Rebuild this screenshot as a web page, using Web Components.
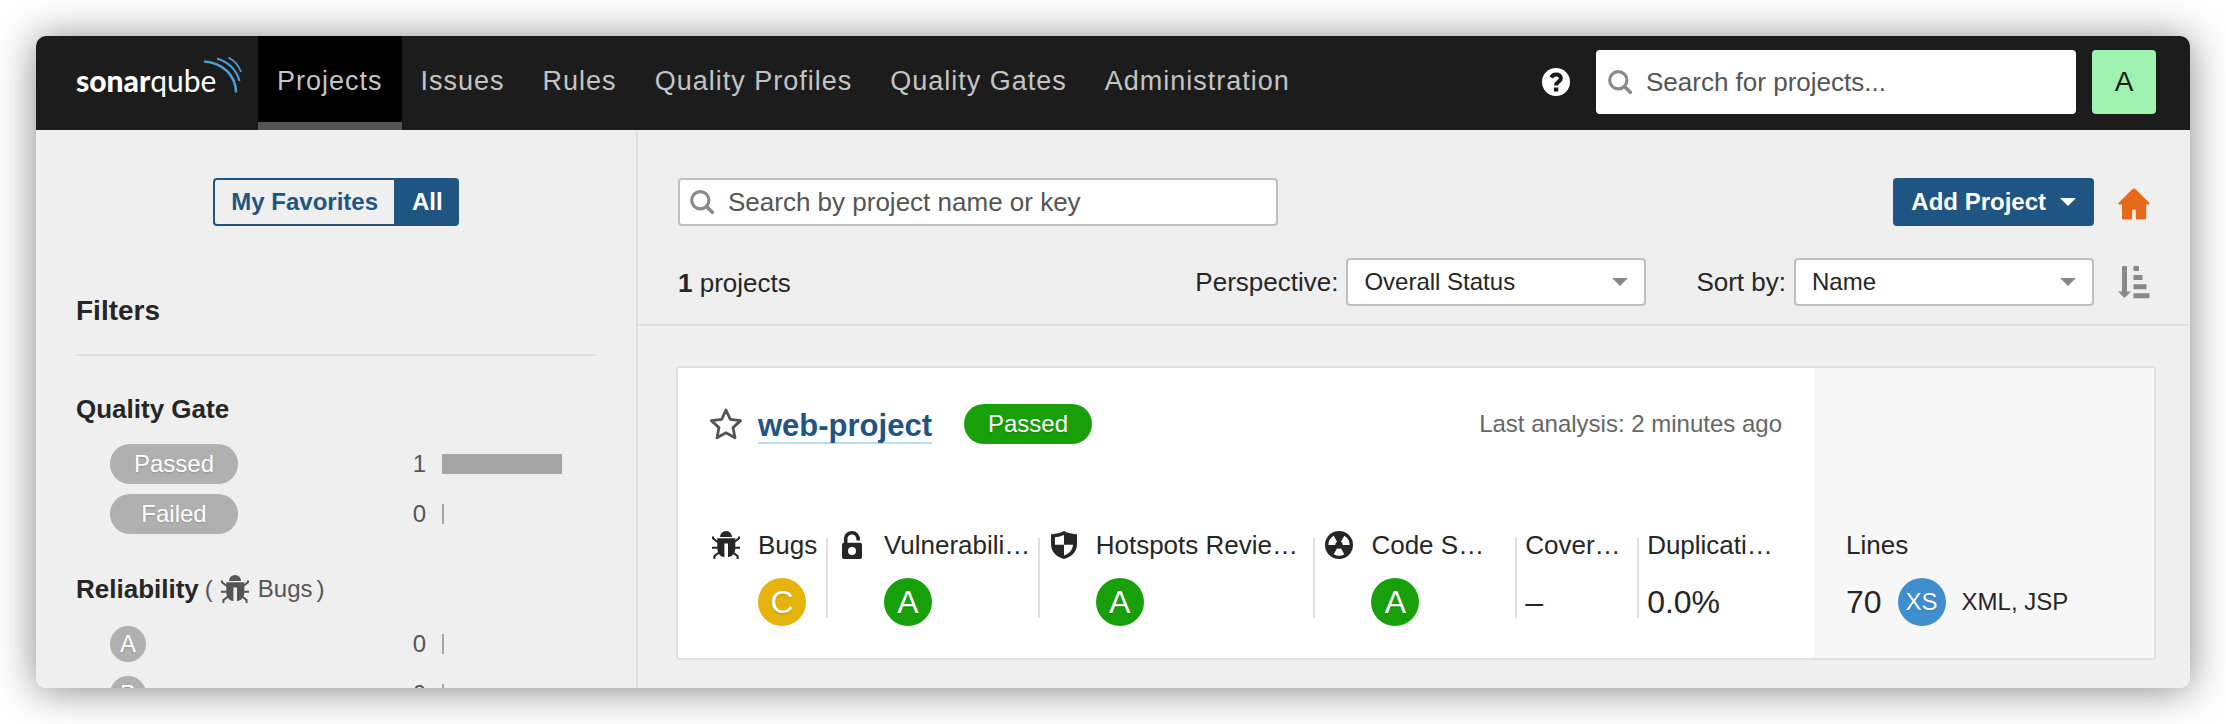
<!DOCTYPE html>
<html lang="en">
<head>
<meta charset="utf-8">
<meta name="viewport" content="width=device-width, initial-scale=1">
<title>Projects</title>
<style>
  html, body { margin: 0; height: 100%; background: #fff; }
  body {
    --blue: #1f5582; --line: #e0e0e0; --field: #bfbfbf; --ink: #262626; --muted: #555;
    font-family: "Liberation Sans", Arial, sans-serif; font-size: 26px; line-height: 32px; color: var(--ink);
  }
</style>
</head>
<body>
<sq-window>
  <sq-navbar slot="top"></sq-navbar>
  <sq-sidebar slot="side"></sq-sidebar>
  <sq-toolbar></sq-toolbar>
  <sq-project-card name="web-project" status="Passed" analysed="Last analysis: 2 minutes ago">
    <sq-metric icon="bug" label="Bugs" first><sq-rating value="C"></sq-rating></sq-metric>
    <sq-metric icon="lock" label="Vulnerabili…"><sq-rating value="A"></sq-rating></sq-metric>
    <sq-metric icon="shield" label="Hotspots Revie…"><sq-rating value="A"></sq-rating></sq-metric>
    <sq-metric icon="smell" label="Code S…"><sq-rating value="A"></sq-rating></sq-metric>
    <sq-metric label="Cover…">–</sq-metric>
    <sq-metric label="Duplicati…" last>0.0%</sq-metric>
    <sq-metric slot="size" label="Lines" first last>70<sq-rating value="XS"></sq-rating><small>XML, JSP</small></sq-metric>
  </sq-project-card>
</sq-window>

<script>
const define = (name, render) => customElements.define(name, class extends HTMLElement {
  connectedCallback() {
    if (!this.shadowRoot) this.attachShadow({ mode: 'open' }).innerHTML = render(this);
  }
});
const attr = (el, name) => el.getAttribute(name) || '';

const icons = {
  bug: [28, 28, '<path d="M8 6a6 6 0 0 1 12 0z"/><path d="M5.3 7.2h18V17c0 5-2.6 8.6-7.3 9.2V12.4h-3.6v13.8C7.8 25.6 5.3 22 5.3 17z"/><path d="M1 5.5v1.8l5 4M27 5.5v1.8l-5 4M0 16.8h7M28 16.8h-7M7 21.5l-4.6 3.6V28M21 21.5l4.6 3.6V28" fill="none" stroke="currentColor" stroke-width="2"/>'],
  lock: [20, 28, '<path fill-rule="evenodd" d="M2 11.7h16a2 2 0 0 1 2 2V26a2 2 0 0 1-2 2H2a2 2 0 0 1-2-2V13.7a2 2 0 0 1 2-2zM10 16a4 4 0 1 0 0 8a4 4 0 0 0 0-8z"/><path d="M3.7 13V7.5C3.7 4 6.5 1.8 10 1.8s6.3 2.4 6.3 7.7" fill="none" stroke="currentColor" stroke-width="3.6"/>'],
  shield: [26, 28, '<path fill-rule="evenodd" d="M13 0C9 2.2 4.5 3 0 3.2V13c0 7.5 5 12.6 13 15 8-2.4 13-7.5 13-15V3.2C21.5 3 17 2.2 13 0zM13 4v9.8H4V6.3C7 6 10.3 5.2 13 4zM13 13.8h9c-.5 5.2-3.7 9-9 10.8z"/>'],
  smell: [28, 28, '<circle cx="14" cy="14" r="14"/><g fill="#fff">' + [0, 120, 240].map(a => `<path transform="rotate(${a} 14 14)" d="M15.9 17.3L19.3 23.2A10.6 10.6 0 0 1 8.7 23.2L12.1 17.3A3.8 3.8 0 0 0 15.9 17.3z"/>`).join('') + '</g>'],
  star: [32, 32, '<path d="M16 2l4.3 9.3 10.3 1.3-7.6 7 2 10.2-9-5-9 5 2-10.2-7.6-7 10.3-1.3z" fill="none" stroke="currentColor" stroke-width="2.8" stroke-linejoin="round"/>'],
  search: [24, 24, '<circle cx="10.3" cy="10.3" r="8.6" fill="none" stroke="currentColor" stroke-width="3.2"/><path d="M16.5 16.5l5.8 5.8" fill="none" stroke="currentColor" stroke-width="3.6" stroke-linecap="round"/>'],
  help: [28, 28, '<circle cx="14" cy="14" r="14"/><path d="M9.3 9.6C10.3 7.5 12 6.6 14.3 6.6c2.7 0 4.6 1.4 4.6 3.7 0 3.4-4.8 3.3-4.8 7.2" fill="none" stroke="#1c1c1c" stroke-width="4"/><path d="M11.9 19.4h4.4v4.2h-4.4z" fill="#1c1c1c"/>'],
  home: [32, 32, '<path d="M16 .5c.6 0 1.2.3 1.7.8L31 14.4c.9 1 .5 2.2-.9 2.2h-1.9V30a1.6 1.6 0 0 1-1.6 1.6h-7.2A1.6 1.6 0 0 1 17.8 30v-7c0-.8-.6-1.4-1.4-1.4h-.8c-.8 0-1.4.6-1.4 1.4v7a1.6 1.6 0 0 1-1.6 1.6H5.6A1.6 1.6 0 0 1 4 30V16.6H1.9c-1.4 0-1.8-1.2-.9-2.2L14.3 1.3c.5-.5 1.1-.8 1.7-.8z"/>'],
  sort: [32, 32, '<path d="M4 1a1 1 0 0 1 1-1h3a1 1 0 0 1 1 1v24.5h4L6.5 32 0 25.5h4zM15.5 0H21v5h-5.5zM15.5 9h9v5h-9zM15.5 18.2h13v5h-13zM15.5 27.3H31.5v5h-16z"/>'],
  caret: [16, 8, '<path d="M0 0h16L8 8z"/>']
};

define('sq-icon', el => {
  const [w, h, body] = icons[attr(el, 'name')];
  return `<style>:host{display:inline-flex;flex:none}svg{display:block;overflow:visible}</style>
  <svg width="${w}" height="${h}" viewBox="0 0 ${w} ${h}" fill="currentColor" aria-hidden="true">${body}</svg>`;
});

define('sq-window', () => `<style>
  :host{display:block;box-sizing:border-box;height:100vh;padding:36px;overflow:hidden}
  .frame{display:flex;flex-direction:column;height:100%;border-radius:10px;overflow:hidden;background:#efefef}
  .shade{height:100%;border-radius:10px;box-shadow:0 2px 40px rgba(0,0,0,.48)}
  .body{display:flex;flex:1;min-height:0}
  main{flex:1;min-width:0}
</style>
<div class="shade"><div class="frame"><slot name="top"></slot>
<div class="body"><slot name="side"></slot><main><slot></slot></main></div></div></div>`);

define('sq-navbar', () => `<style>
  :host{display:flex;align-items:center;flex:none;height:94px;padding:0 34px 0 40px;background:#1c1c1c;box-sizing:border-box}
  .logo{display:block;width:166px;margin-right:16px}
  svg{display:block}
  nav{display:flex;flex:1;align-self:stretch}
  nav a{display:flex;align-items:center;padding:0 19px;border-bottom:8px solid transparent;border-top:4px solid transparent;color:#c4c4c4;font-size:27px;letter-spacing:1px;text-decoration:none;white-space:nowrap}
  nav a.on{background:#000;border-top-color:#000;border-bottom-color:#555}
  button{border:0;padding:0;font:inherit;cursor:pointer}
  .help{display:flex;background:none;color:#fff;margin-right:26px}
  .me{width:64px;height:64px;margin-left:16px;border-radius:4px;background:#9ff2b0;color:#1c1c1c;font-size:28px}
  sq-search{width:480px}
  .tail{display:flex;align-items:center;padding-bottom:2px}
</style>
<a class="logo" href="#" aria-label="sonarqube"><svg width="166" height="54" viewBox="0 5 166 54">
  <text y="41" font-family="Lato, sans-serif" font-size="30" fill="#fff"><tspan font-weight="900">sonar</tspan><tspan font-weight="400">qube</tspan></text>
  <g fill="none" stroke="#4b9fd5"><path d="M128 10.5C147 11.5 160 25 160 41.5" stroke-width="2.6"/><path d="M141 7.5C152 11 160.5 19 163.5 30" stroke-width="2"/><path d="M152.5 6.5C158 9.5 163 15 165 21" stroke-width="1.7"/></g>
</svg></a>
<nav><a class="on" href="#">Projects</a><a href="#">Issues</a><a href="#">Rules</a><a href="#">Quality Profiles</a><a href="#">Quality Gates</a><a href="#">Administration</a></nav>
<div class="tail"><button class="help" aria-label="Help"><sq-icon name="help"></sq-icon></button>
<sq-search hint="Search for projects..." tall></sq-search>
<button class="me">A</button></div>`);

define('sq-search', el => `<style>
  :host{display:block}
  label{display:flex;align-items:center;box-sizing:border-box;height:48px;padding:0 10px;gap:14px;background:#fff;border:2px solid var(--field);border-radius:4px;color:#8a8a8a}
  :host([tall]) label{height:64px;border-color:#fff}
  input{flex:1;min-width:0;border:0;outline:0;padding:0;background:none;font:inherit;color:var(--ink)}
  input::placeholder{color:#555;opacity:1}
</style>
<label><sq-icon name="search"></sq-icon><input type="search" placeholder="${attr(el, 'hint')}" aria-label="${attr(el, 'hint')}"></label>`);

define('sq-sidebar', () => `<style>
  :host{display:block;flex:none;box-sizing:border-box;width:602px;padding:48px 40px 0;border-right:2px solid var(--line)}
  .switch{display:flex;justify-content:center}
  button{height:48px;padding:0 16px;border:2px solid var(--blue);border-radius:4px 0 0 4px;background:none;color:var(--blue);font:bold 24px/32px "Liberation Sans",Arial,sans-serif}
  button+button{padding:0 14px;border-radius:0 4px 4px 0;background:var(--blue);color:#fff}
  h2{margin:69px 0 3px;padding-bottom:27px;border-bottom:2px solid var(--line);font-size:28px;line-height:32px}
</style>
<div class="switch"><button>My Favorites</button><button aria-pressed="true">All</button></div>
<h2>Filters</h2>
<sq-facet label="Quality Gate"><sq-facet-row count="1"><sq-pill>Passed</sq-pill></sq-facet-row><sq-facet-row count="0"><sq-pill>Failed</sq-pill></sq-facet-row></sq-facet>
<sq-facet label="Reliability" icon="bug" note="Bugs"><sq-facet-row count="0"><sq-rating value="A" muted></sq-rating></sq-facet-row><sq-facet-row count="0"><sq-rating value="B" muted></sq-rating></sq-facet-row></sq-facet>`);

define('sq-facet', el => `<style>
  :host{display:block;padding-top:34px}
  header{display:flex;align-items:center;height:32px;margin-bottom:14px;font-size:24px;color:var(--muted)}
  h3{margin:0;font-size:26px;line-height:32px;color:var(--ink)}
  .open{margin:0 8px 0 6px}.note{margin:0 4px 0 9px}
</style>
<header><h3>${attr(el, 'label')}</h3>${attr(el, 'icon') ? `<span class="open">(</span><sq-icon name="${attr(el, 'icon')}"></sq-icon><span class="note">${attr(el, 'note')}</span><span>)</span>` : ''}</header>
<slot></slot>`);

define('sq-facet-row', el => `<style>
  :host{display:block}
  a{display:grid;grid-template-columns:1fr 16px 120px;align-items:center;height:50px;padding:0 34px;color:var(--muted);font-size:24px;text-decoration:none}
  .left{display:flex;align-items:center;justify-content:space-between}
  i{grid-column:3;display:block;height:20px;width:2px;background:#a5a5a5}
  i.full{width:100%}
</style>
<a href="#"><span class="left"><slot></slot><span>${attr(el, 'count')}</span></span><i class="${attr(el, 'count') === '0' ? '' : 'full'}"></i></a>`);

define('sq-pill', () => `<style>
  :host{display:block;width:128px;border-radius:20px;background:#b0b0b0;color:#fff;font-size:24px;line-height:40px;text-align:center;text-shadow:0 1px 2px rgba(0,0,0,.18)}
  :host([ok]){background:#18a00a}
</style><slot></slot>`);

define('sq-rating', el => {
  const v = attr(el, 'value');
  const colour = el.hasAttribute('muted') ? '#b0b0b0' : { A: '#18a00a', C: '#e6b30c', XS: '#3f8fcf' }[v];
  return `<style>
  :host{display:block;flex:none;width:48px;border-radius:50%;background:${colour};color:#fff;font-size:${v === 'XS' ? 24 : 32}px;line-height:48px;text-align:center;text-shadow:0 1px 2px rgba(0,0,0,.18)}
  :host([muted]){width:36px;font-size:24px;line-height:36px}
</style>${v}`;
});

define('sq-toolbar', () => `<style>
  :host{display:block;padding:48px 40px 18px;border-bottom:2px solid var(--line)}
  .row{display:flex;align-items:center;height:48px}
  .row+.row{margin-top:32px}
  sq-search{width:600px;margin-right:auto}
  .add{display:flex;align-items:center;gap:14px;height:48px;padding:0 18px;border:0;border-radius:4px;background:var(--blue);color:#fff;font:bold 24px/32px "Liberation Sans",Arial,sans-serif}
  .ico{display:flex;margin-left:24px;padding:0;border:0;background:none;color:#888}
  .home{color:#e8681a;padding-top:4px}
  .count{margin-right:auto;padding-top:2px}
  sq-picker+sq-picker{margin-left:50px}
</style>
<div class="row"><sq-search hint="Search by project name or key"></sq-search>
<button class="add">Add Project<sq-icon name="caret"></sq-icon></button>
<button class="ico home" aria-label="Home"><sq-icon name="home"></sq-icon></button></div>
<div class="row"><span class="count"><b>1</b> projects</span>
<sq-picker label="Perspective:" value="Overall Status"></sq-picker><sq-picker label="Sort by:" value="Name"></sq-picker>
<button class="ico" aria-label="Sort direction"><sq-icon name="sort"></sq-icon></button></div>`);

define('sq-picker', el => `<style>
  :host{display:block}
  label{display:flex;align-items:center;gap:8px}
  .box{display:grid;align-items:center;width:300px}
  select,sq-icon{grid-area:1/1}
  select{appearance:none;width:100%;height:48px;padding:0 16px;border:2px solid var(--field);border-radius:4px;background:#fff;color:var(--ink);font:24px/32px "Liberation Sans",Arial,sans-serif}
  sq-icon{justify-self:end;margin-right:18px;color:#888;pointer-events:none}
</style>
<label><span>${attr(el, 'label')}</span><span class="box"><select><option>${attr(el, 'value')}</option></select><sq-icon name="caret"></sq-icon></span></label>`);

define('sq-project-card', el => `<style>
  :host{display:flex;margin:40px 34px 0 38px;border:2px solid var(--line);border-radius:4px;background:#fff}
  .main{flex:1;min-width:0;padding:36px 32px 32px}
  .side{display:flex;align-items:flex-end;flex:none;box-sizing:border-box;width:340px;padding:0 32px 32px;background:#f7f7f7}
  header{display:flex;align-items:center;height:40px;margin-bottom:85px}
  .star{display:flex;padding:0;border:0;background:none;color:#555}
  .name{margin:2px 32px 0 16px;padding-top:4px;border-bottom:2px solid #b9dcf0;color:var(--blue);font-size:31px;font-weight:bold;line-height:32px;text-decoration:none}
  time{margin-left:auto;color:#666;font-size:24px}
  .metrics{display:grid;grid-template-columns:118fr 212fr 276fr 202fr 122fr 143fr}
</style>
<div class="main"><header><button class="star" aria-label="Favorite"><sq-icon name="star"></sq-icon></button>
<a class="name" href="#">${attr(el, 'name')}</a><sq-pill ok>${attr(el, 'status')}</sq-pill><time>${attr(el, 'analysed')}</time></header>
<div class="metrics"><slot></slot></div></div>
<div class="side"><slot name="size"></slot></div>`);

define('sq-metric', el => {
  const icon = attr(el, 'icon');
  return `<style>
  :host{display:grid;grid-template-columns:${icon ? '32px 1fr' : '1fr'};column-gap:16px;row-gap:17px;padding-left:8px;white-space:nowrap;background:linear-gradient(var(--line),var(--line)) no-repeat right 9px/2px 80px}
  :host([first]){padding-left:0}
  :host([last]){background:none}
  sq-icon{justify-self:center;align-self:center}
  .value{display:flex;align-items:center;gap:16px;height:48px;font-size:32px;${icon ? 'grid-column:2' : ''}}
  ::slotted(small){font-size:24px}
</style>
${icon ? `<sq-icon name="${icon}"></sq-icon>` : ''}<span>${attr(el, 'label')}</span><div class="value"><slot></slot></div>`;
});
</script>
</body>
</html>
